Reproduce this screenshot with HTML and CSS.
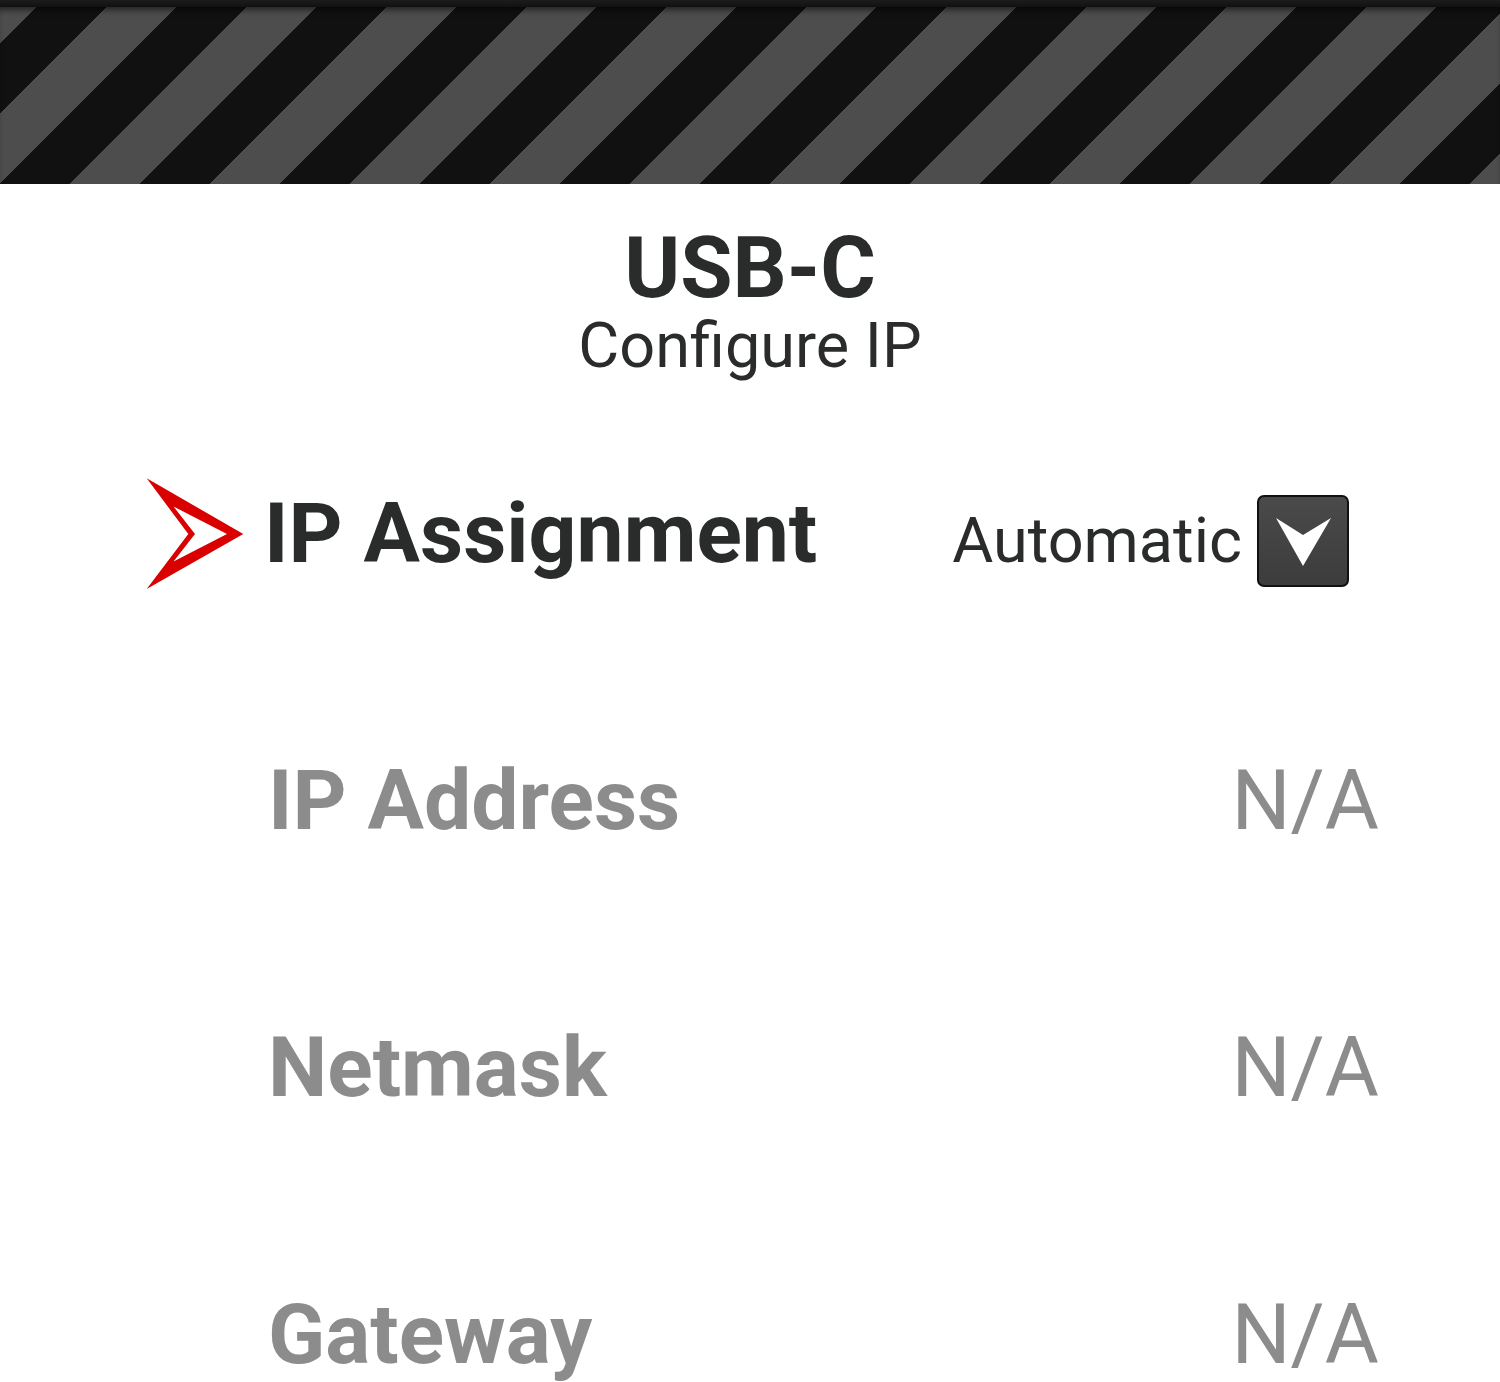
FILE: index.html
```html
<!DOCTYPE html>
<html lang="en">
<head>
    <meta charset="UTF-8">
    <title>USB-C - Configure IP</title>
    <link rel="stylesheet" href="styles.css">
</head>
<body>
    <div class="topbar"></div>
    <div class="hazard"></div>

    <div class="title">
        <h1>USB-C</h1>
        <div class="subtitle">Configure IP</div>
    </div>

    <div class="menu">
        <div class="row selected">
            <svg class="pointer" viewBox="0 0 98 112" width="98" height="112">
                <path fill="#d90000" fill-rule="evenodd" d="M0.7 0.3 L97.3 56 L0.7 111 L42.3 56 Z M27.5 28.5 L49 56 L27.5 83.5 L81 56 Z"/>
            </svg>
            <div class="label">IP Assignment</div>
            <div class="value select">
                <span>Automatic</span>
                <span class="dropdown">
                    <svg viewBox="0 0 88 88" width="88" height="88">
                        <path fill="#fff" d="M17 21 L44 38 L72 21 L44 69 Z"/>
                    </svg>
                </span>
            </div>
        </div>
        <div class="row disabled">
            <span class="pointer"></span>
            <div class="label">IP Address</div>
            <div class="value">N/A</div>
        </div>
        <div class="row disabled">
            <span class="pointer"></span>
            <div class="label">Netmask</div>
            <div class="value">N/A</div>
        </div>
        <div class="row disabled">
            <span class="pointer"></span>
            <div class="label">Gateway</div>
            <div class="value">N/A</div>
        </div>
    </div>
</body>
</html>
```

FILE: styles.css
```css
html { overflow: hidden; }
body { margin: 0; font-family: Roboto, 'Liberation Sans', sans-serif; background: #fff; color: #2a2c2c; }

.topbar { height: 7px; background: linear-gradient(#1c1c1c, #111); }
.hazard {
    height: 177px;
    background: repeating-linear-gradient(135deg, #4d4d4d 0, #4d4d4d 25.5px, #111 25.5px, #111 75px, #4d4d4d 75px, #4d4d4d 99px);
    box-shadow: inset 0 6px 6px -3px rgba(0, 0, 0, 0.55);
}

.title { text-align: center; padding-top: 42px; }
.title h1 { margin: 0; font-size: 85px; line-height: 1; font-weight: 700; }
.subtitle { margin-top: 3px; font-size: 63px; line-height: 1; }

.menu { margin-top: 23px; }
.row { display: flex; align-items: center; height: 267px; padding: 0 121px 0 146px; }
.pointer { width: 98px; height: 112px; flex: none; margin-right: 24px; }
.selected .pointer { margin-right: 20px; }
.label { flex: 1; font-size: 84px; font-weight: 700; }
.value { font-size: 83px; }
.disabled { color: #8c8c8c; }

.select { display: flex; align-items: center; gap: 15px; font-size: 63px; margin: 14px 30px 0 0; }
.dropdown {
    width: 88px; height: 88px;
    background: linear-gradient(#4a4a4a, #3c3c3c);
    border: 2px solid #111;
    border-radius: 7px;
}
.dropdown svg { display: block; }
```
